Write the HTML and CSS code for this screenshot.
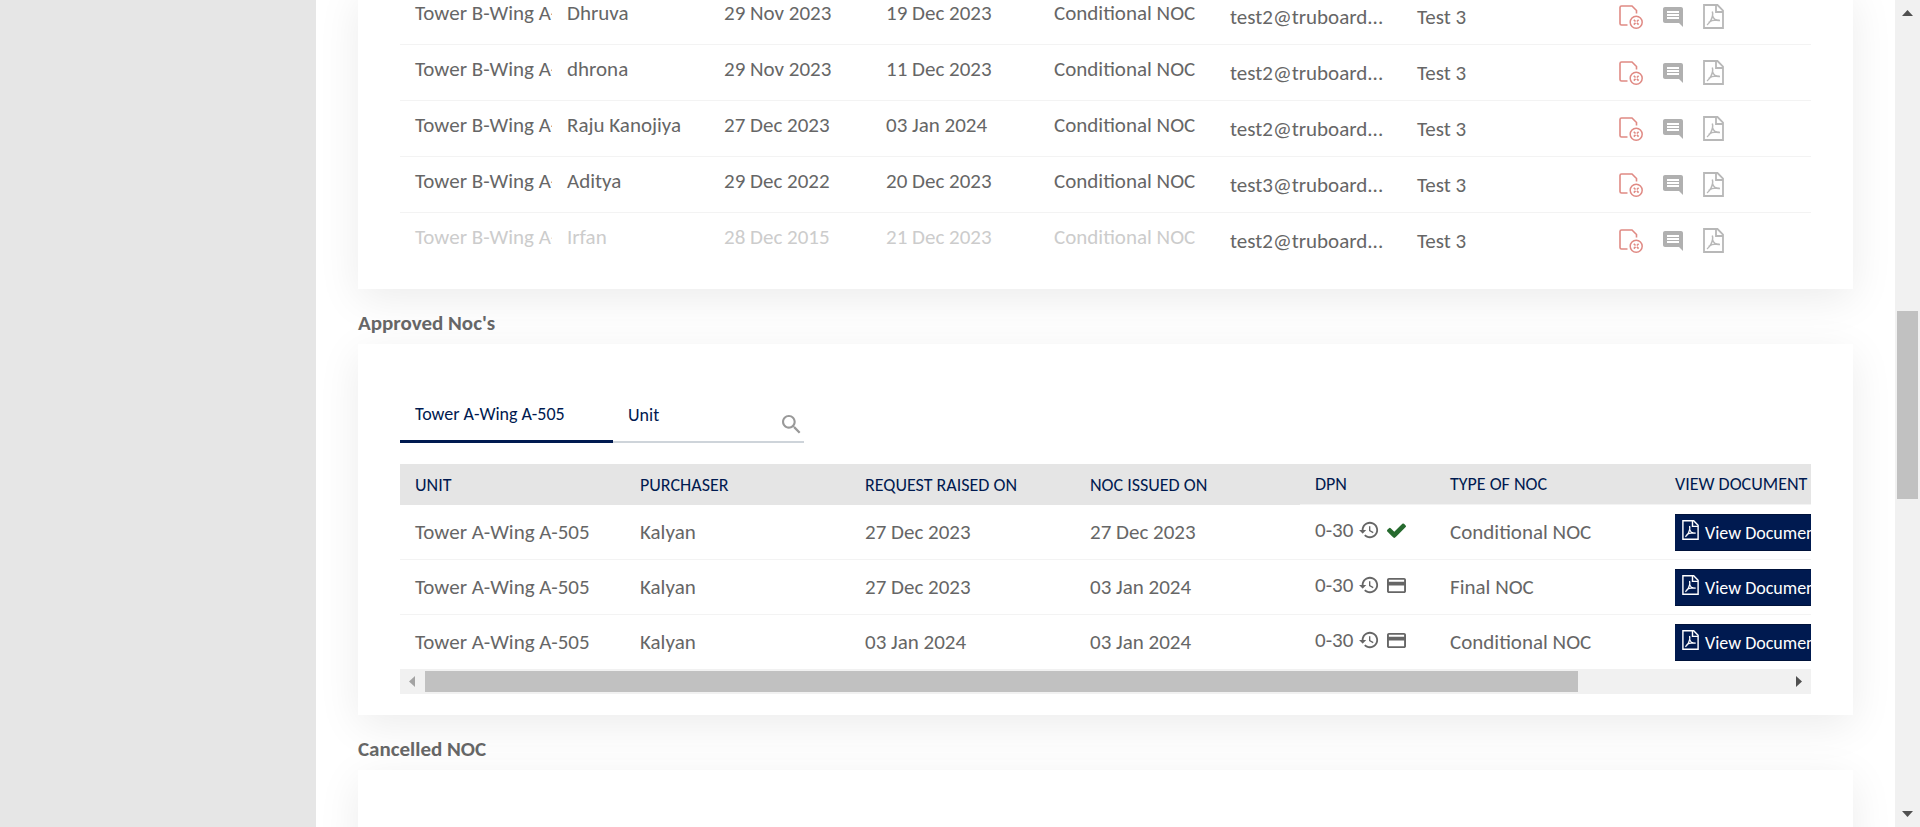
FILE: index.html
```html
<!DOCTYPE html>
<html lang="en">
<head>
<meta charset="utf-8">
<title>NOC Requests</title>
<link rel="stylesheet" href="styles.css">
</head>
<body>
<svg class="sprite" aria-hidden="true">
  <symbol id="i-reject" viewBox="0 0 24 24"><path d="M8.500 20H2.500Q1 20 1 18.500V2.500Q1 1 2.500 1H13L17.500 5.500V8.500" fill="none" stroke="currentColor" stroke-width="1.600"/><circle cx="17.200" cy="17.200" r="6" fill="none" stroke="currentColor" stroke-width="1.500"/><path d="M14.800 14.800l1.700 1.700M19.600 14.800l-1.700 1.700M14.800 19.600l1.700-1.700M19.600 19.600l-1.700-1.700" stroke="currentColor" stroke-width="1.600"/></symbol>
  <symbol id="i-comment" viewBox="2 2 20 20"><path fill="currentColor" d="M21.990 4c0-1.100-.89-2-1.990-2H4c-1.100 0-2 .9-2 2v12c0 1.100.9 2 2 2h14l4 4-.01-18zM18 14H6v-2h12v2zm0-3H6V9h12v2zm0-3H6V6h12v2z"/></symbol>
  <symbol id="i-pdf" viewBox="0 0 21 25"><g fill="none" stroke="currentColor" stroke-width="1.800"><path d="M1 1H14.500L20 6.500V24H1Z"/><path d="M13 1V8H20"/><path stroke-width="1.500" d="M9.300 7.500C10.200 10 9.500 13 8 16C6.800 18.500 5.500 20 4 20.800M9.600 12C10.800 15.500 13 17 17 16.500M5.500 18.500C8 16.500 12 15.700 16.500 16.300"/></g></symbol>
  <symbol id="i-search" viewBox="3 3 18 18"><path fill="currentColor" d="M15.500 14h-.79l-.28-.27C15.410 12.590 16 11.110 16 9.500 16 5.910 13.090 3 9.500 3S3 5.910 3 9.500 5.910 16 9.500 16c1.610 0 3.090-.59 4.230-1.570l.27.28v.79l5 4.990L20.490 19l-4.990-5zm-6 0C7.010 14 5 11.990 5 9.500S7.010 5 9.500 5 14 7.010 14 9.500 11.990 14 9.500 14z"/></symbol>
  <symbol id="i-history" viewBox="1 1 22 22"><path fill="currentColor" d="M13 3c-4.970 0-9 4.030-9 9H1l3.890 3.890.07.14L9 12H6c0-3.870 3.130-7 7-7s7 3.130 7 7-3.130 7-7 7c-1.930 0-3.680-.79-4.940-2.060l-1.420 1.420C8.270 19.990 10.510 21 13 21c4.970 0 9-4.030 9-9s-4.030-9-9-9zm-1 5v5l4.280 2.540.72-1.210-3.500-2.080V8H12z"/></symbol>
  <symbol id="i-card" viewBox="2 2 20 20"><path fill="currentColor" d="M20 4H4c-1.110 0-1.990.89-1.990 2L2 18c0 1.110.89 2 2 2h16c1.110 0 2-.89 2-2V6c0-1.110-.89-2-2-2zm0 14H4v-6h16v6zm0-10H4V6h16v2z"/></symbol>
  <symbol id="i-check" viewBox="121 140 1550 1550"><path fill="currentColor" d="M1671 566q0 40-28 68l-724 724-136 136q-28 28-68 28t-68-28l-136-136-362-362q-28-28-28-68t28-68l136-136q28-28 68-28t68 28l294 295 656-657q28-28 68-28t68 28l136 136q28 28 28 68z"/></symbol>
</svg>
<div class="app">
  <aside class="sidebar"></aside>
  <main class="content">
    <section class="card card-requests">
      <table class="requests">
        <colgroup><col class="c-unit"><col class="c-name"><col class="c-raised"><col class="c-due"><col class="c-type"><col class="c-mail"><col class="c-owner"><col></colgroup>
        <tbody>
          <tr><td>Tower B-Wing A-</td><td>Dhruva</td><td>29 Nov 2023</td><td>19 Dec 2023</td><td>Conditional NOC</td><td>test2@truboard...</td><td>Test 3</td><td><div class="actions"><button class="reject" aria-label="Reject"><svg><use href="#i-reject"/></svg></button><button class="comment" aria-label="Comment"><svg><use href="#i-comment"/></svg></button><button class="pdf" aria-label="PDF"><svg><use href="#i-pdf"/></svg></button></div></td></tr>
          <tr><td>Tower B-Wing A-</td><td>dhrona</td><td>29 Nov 2023</td><td>11 Dec 2023</td><td>Conditional NOC</td><td>test2@truboard...</td><td>Test 3</td><td><div class="actions"><button class="reject" aria-label="Reject"><svg><use href="#i-reject"/></svg></button><button class="comment" aria-label="Comment"><svg><use href="#i-comment"/></svg></button><button class="pdf" aria-label="PDF"><svg><use href="#i-pdf"/></svg></button></div></td></tr>
          <tr><td>Tower B-Wing A-</td><td>Raju Kanojiya</td><td>27 Dec 2023</td><td>03 Jan 2024</td><td>Conditional NOC</td><td>test2@truboard...</td><td>Test 3</td><td><div class="actions"><button class="reject" aria-label="Reject"><svg><use href="#i-reject"/></svg></button><button class="comment" aria-label="Comment"><svg><use href="#i-comment"/></svg></button><button class="pdf" aria-label="PDF"><svg><use href="#i-pdf"/></svg></button></div></td></tr>
          <tr><td>Tower B-Wing A-</td><td>Aditya</td><td>29 Dec 2022</td><td>20 Dec 2023</td><td>Conditional NOC</td><td>test3@truboard...</td><td>Test 3</td><td><div class="actions"><button class="reject" aria-label="Reject"><svg><use href="#i-reject"/></svg></button><button class="comment" aria-label="Comment"><svg><use href="#i-comment"/></svg></button><button class="pdf" aria-label="PDF"><svg><use href="#i-pdf"/></svg></button></div></td></tr>
          <tr class="inactive"><td>Tower B-Wing A-</td><td>Irfan</td><td>28 Dec 2015</td><td>21 Dec 2023</td><td>Conditional NOC</td><td>test2@truboard...</td><td>Test 3</td><td><div class="actions"><button class="reject" aria-label="Reject"><svg><use href="#i-reject"/></svg></button><button class="comment" aria-label="Comment"><svg><use href="#i-comment"/></svg></button><button class="pdf" aria-label="PDF"><svg><use href="#i-pdf"/></svg></button></div></td></tr>
        </tbody>
      </table>
    </section>

    <h2>Approved Noc's</h2>
    <section class="card card-approved">
      <form class="filters">
        <button type="button" class="filter-tab">Tower A-Wing A-505</button>
        <div class="filter-search">
          <input type="text" placeholder="Unit" aria-label="Unit">
          <button type="button" aria-label="Search"><svg><use href="#i-search"/></svg></button>
        </div>
      </form>
      <div class="table-clip">
        <table class="approved">
          <colgroup><col class="c-wide"><col class="c-wide"><col class="c-wide"><col class="c-wide"><col class="c-dpn"><col class="c-wide"><col></colgroup>
          <thead><tr><th>UNIT</th><th>PURCHASER</th><th>REQUEST RAISED ON</th><th>NOC ISSUED ON</th><th class="lined">DPN</th><th class="lined">TYPE OF NOC</th><th class="lined">VIEW DOCUMENT</th></tr></thead>
          <tbody>
            <tr><td>Tower A-Wing A-505</td><td>Kalyan</td><td>27 Dec 2023</td><td>27 Dec 2023</td><td><div class="dpn">0-30<svg class="history"><use href="#i-history"/></svg><svg class="paid"><use href="#i-check"/></svg></div></td><td>Conditional NOC</td><td><button class="view"><svg><use href="#i-pdf"/></svg>View Document</button></td></tr>
            <tr><td>Tower A-Wing A-505</td><td>Kalyan</td><td>27 Dec 2023</td><td>03 Jan 2024</td><td><div class="dpn">0-30<svg class="history"><use href="#i-history"/></svg><svg class="due"><use href="#i-card"/></svg></div></td><td>Final NOC</td><td><button class="view"><svg><use href="#i-pdf"/></svg>View Document</button></td></tr>
            <tr><td>Tower A-Wing A-505</td><td>Kalyan</td><td>03 Jan 2024</td><td>03 Jan 2024</td><td><div class="dpn">0-30<svg class="history"><use href="#i-history"/></svg><svg class="due"><use href="#i-card"/></svg></div></td><td>Conditional NOC</td><td><button class="view"><svg><use href="#i-pdf"/></svg>View Document</button></td></tr>
          </tbody>
        </table>
      </div>
      <div class="hscroll"><svg class="muted" viewBox="0 0 25 25"><path d="M15 7v11l-6-5.500z"/></svg><div class="hrail"><div class="hthumb"></div></div><svg viewBox="0 0 25 25"><path d="M10 7v11l6-5.500z"/></svg></div>
    </section>

    <h2>Cancelled NOC</h2>
    <section class="card card-cancelled"></section>
  </main>
  <div class="vscroll"><svg viewBox="0 0 25 25"><path d="M7 16h11l-5.500-6z"/></svg><div class="vrail"><div class="vthumb"></div></div><svg viewBox="0 0 25 25"><path d="M7 9h11l-5.500 6z"/></svg></div>
</div>
</body>
</html>
```
FILE: styles.css
```css
* { box-sizing: border-box; }
body { margin: 0; font-family: Calibri, Carlito, Lato, "Open Sans", sans-serif; font-size: 21px; line-height: 24px; color: #666; background: #fff; }
button, input { font: inherit; color: inherit; background: none; border: 0; padding: 0; margin: 0; }
svg { display: block; flex: none; }
.sprite { display: none; }
.app { display: grid; grid-template-columns: 316px 1fr 25px; height: 100vh; overflow: hidden; }
.sidebar { background: #e6e6e6; }
.content { overflow: hidden; padding: 0 42px; min-width: 0; }
.card { background: #fff; padding: 0 42px 21px; box-shadow: 0 10px 40px rgba(0, 0, 0, .08); }
.card-requests { margin-top: -11px; }
.card-cancelled { height: 240px; }
h2 { margin: 0; padding: 22px 0 9px; font-size: 21px; line-height: 24px; font-weight: 700; position: relative; }

table { border-collapse: separate; border-spacing: 0; table-layout: fixed; width: 100%; }
td, th { padding: 0 0 0 15px; text-align: left; white-space: nowrap; overflow: hidden; font-weight: 400; }
td { border-bottom: 1px solid #f3f3f3; }
tbody tr:last-child td { border-bottom: 0; }

.requests tr { height: 56px; }
.requests tr:last-child { height: 55px; }
.requests td:nth-child(-n+5) { padding-bottom: 8px; }
.requests .inactive td:nth-child(-n+5) { color: #ccc; }
.c-unit { width: 152px; }
.c-name { width: 157px; }
.c-raised { width: 162px; }
.c-due { width: 168px; }
.c-type { width: 176px; }
.c-mail { width: 187px; }
.c-owner { width: 202px; }
.actions { display: flex; align-items: center; }
.actions button { display: block; }
.reject { color: #e08a84; margin-right: 20px; }
.reject svg { width: 24px; height: 24px; }
.comment { color: #b0b0b0; margin-right: 20px; }
.comment svg { width: 20px; height: 20px; }
.pdf { color: #b8b8b8; }
.pdf svg { width: 21px; height: 25px; }

.filters { display: flex; padding-top: 42px; margin-bottom: 21px; font-size: 18px; color: #001a50; }
.filter-tab { width: 213px; height: 57px; padding: 2px 15px 0; text-align: left; border-bottom: 3px solid #001a50; }
.filter-search { width: 191px; height: 57px; display: flex; align-items: center; border-bottom: 2px solid #ced4da; }
.filter-search input { flex: 1; min-width: 0; padding: 2px 0 0 15px; outline: 0; }
.filter-search input::placeholder { color: inherit; opacity: 1; }
.filter-search button { color: #999; margin: 22px 3px 0 0; }
.filter-search svg { width: 19px; height: 19px; }

.table-clip { overflow: hidden; }
.approved { width: 118%; }
.approved thead tr { height: 41px; }
.approved th { font-size: 18px; color: #001a50; background: #e5e5e5; }
.approved .lined { border-bottom: 1px solid #f3f3f3; }
.approved tbody tr { height: 55px; }
.approved tbody tr:last-child { height: 54px; }
.c-wide { width: 225px; }
.c-dpn { width: 135px; }
.dpn { display: flex; align-items: center; padding-bottom: 4px; }
.history { width: 20px; height: 20px; margin: 0 8px 0 6px; }
.paid, .due { width: 19px; height: 19px; }
.paid { color: #266a2e; }
.view { display: flex; align-items: center; gap: 6px; height: 37px; padding: 2px 8px 0 7px; font-size: 18px; color: #fff; background: #001a50; border: 1px solid #00123a; border-left: 0; }
.view svg { width: 17px; height: 20px; margin-bottom: 6px; }

.hscroll { display: flex; height: 25px; background: #f1f1f1; }
.hscroll svg, .vscroll svg { width: 25px; height: 25px; fill: #505050; }
.hscroll .muted { fill: #a3a3a3; }
.hrail { flex: 1; padding: 2px 0; }
.hthumb { width: 84.7%; height: 100%; background: #c1c1c1; }
.vscroll { display: flex; flex-direction: column; background: #f1f1f1; }
.vrail { flex: 1; padding: 0 2px; display: grid; grid-template-rows: 286fr 188fr 303fr; }
.vthumb { grid-row: 2; background: #c1c1c1; }
```
